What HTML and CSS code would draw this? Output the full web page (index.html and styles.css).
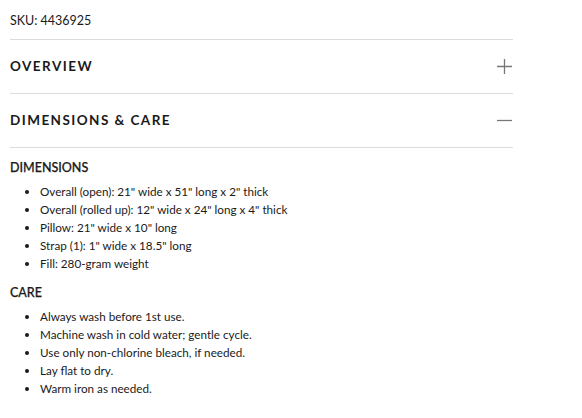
FILE: index.html
```html
<!DOCTYPE html>
<html>
<head>
<meta charset="utf-8">
<link rel="stylesheet" href="styles.css">
</head>
<body>
<div class="panel">
  <div class="sku">SKU: 4436925</div>
  <div class="acc">
    <div class="acc-header">
      <span class="acc-title">OVERVIEW</span>
      <svg class="icon" width="15" height="15" viewBox="0 0 15 15"><path d="M7.5 0V15M0 7.5H15" stroke="#777" stroke-width="1.3" fill="none"/></svg>
    </div>
  </div>
  <div class="acc">
    <div class="acc-header">
      <span class="acc-title">DIMENSIONS &amp; CARE</span>
      <svg class="icon" width="15" height="15" viewBox="0 0 15 15"><path d="M0 7.5H15" stroke="#777" stroke-width="1.3" fill="none"/></svg>
    </div>
  </div>
  <div class="acc-body">
    <div class="sub">DIMENSIONS</div>
    <ul class="list">
      <li>Overall (open): 21" wide x 51" long x 2" thick</li>
      <li>Overall (rolled up): 12" wide x 24" long x 4" thick</li>
      <li>Pillow: 21" wide x 10" long</li>
      <li>Strap (1): 1" wide x 18.5" long</li>
      <li>Fill: 280-gram weight</li>
    </ul>
    <div class="sub care">CARE</div>
    <ul class="list">
      <li>Always wash before 1st use.</li>
      <li>Machine wash in cold water; gentle cycle.</li>
      <li>Use only non-chlorine bleach, if needed.</li>
      <li>Lay flat to dry.</li>
      <li>Warm iron as needed.</li>
    </ul>
  </div>
</div>
</body>
</html>
```
FILE: styles.css
```css
html, body {
  margin: 0;
  padding: 0;
  background: #fff;
}
body {
  font-family: "Lato", "Liberation Sans", sans-serif;
  color: #1a1a1a;
}
.panel {
  width: 503px;
  margin-left: 10px;
}
.sku {
  font-size: 12.5px;
  line-height: 18px;
  padding: 12px 0 9px;
  border-bottom: 1px solid #dcdcdc;
}
.acc-header {
  box-sizing: border-box;
  height: 54px;
  padding-bottom: 2px;
  border-bottom: 1px solid #dcdcdc;
  display: flex;
  align-items: center;
  justify-content: space-between;
}
.acc-title {
  font-size: 13.5px;
  font-weight: 700;
  letter-spacing: 1.45px;
}
.icon {
  margin-right: 1px;
  margin-top: 2px;
}
.acc-body {
  padding-top: 11px;
}
.sub {
  font-size: 12.5px;
  line-height: 18px;
  font-weight: 500;
  -webkit-text-stroke: 0.25px #1a1a1a;
}
.care {
  margin-top: 12px;
}
.list {
  margin: 5px 0 0;
  padding-left: 30px;
  font-size: 11.7px;
  line-height: 18px;
}
```
